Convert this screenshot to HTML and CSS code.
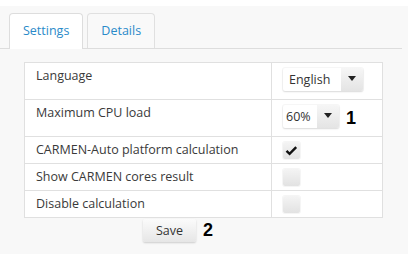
FILE: index.html
```
<!DOCTYPE html>
<html>
    <head>
        <title>Settings</title>
        <meta charset="UTF-8">
        <link rel="stylesheet" href="styles.css">
    </head>
    <body>
        <div class="panel">
            <ul class="tabs">
                <li class="tab active">Settings</li>
                <li class="tab">Details</li>
            </ul>
            <div class="tab-body">
                <table class="settings">
                    <tr class="tall">
                        <td class="label">Language</td>
                        <td class="value">
                            <div class="select lang">
                                <span class="select-text">English</span>
                                <span class="select-btn"><i class="caret"></i></span>
                            </div>
                        </td>
                    </tr>
                    <tr class="tall">
                        <td class="label">Maximum CPU load</td>
                        <td class="value">
                            <div class="value-row">
                                <div class="select cpu">
                                    <span class="select-text">60%</span>
                                    <span class="select-btn"><i class="caret"></i></span>
                                </div>
                                <span class="mark">1</span>
                            </div>
                        </td>
                    </tr>
                    <tr>
                        <td class="label">CARMEN-Auto platform calculation</td>
                        <td class="value">
                            <span class="check">
                                <svg width="13" height="11" viewBox="0 0 13 11"><path d="M1.5 5.8 L4.6 8.8 L11.2 2.2" fill="none" stroke="#111" stroke-width="2.4"/></svg>
                            </span>
                        </td>
                    </tr>
                    <tr>
                        <td class="label">Show CARMEN cores result</td>
                        <td class="value"><span class="check"></span></td>
                    </tr>
                    <tr>
                        <td class="label">Disable calculation</td>
                        <td class="value"><span class="check"></span></td>
                    </tr>
                </table>
                <div class="actions">
                    <button class="btn">Save</button>
                    <span class="mark">2</span>
                </div>
            </div>
        </div>
    </body>
</html>
```

FILE: styles.css
```
html, body{
    margin: 0;
    background: #ffffff;
}

body{
    font-family: "Open Sans", "Liberation Sans", sans-serif;
    font-size: 12.5px;
    color: #3a3a3a;
}

.panel{
    margin-top: 6px;
    height: 248px;
    background: #f8f8f8;
    padding-top: 7px;
    box-sizing: border-box;
}

.tabs{
    display: flex;
    gap: 4px;
    list-style: none;
    margin: 0 6px 0 0;
    padding: 0 0 0 9px;
    border-bottom: 1px solid #dddddd;
}

.tab{
    height: 34px;
    line-height: 34px;
    padding: 0 13px;
    margin-bottom: -1px;
    border: 1px solid #e0e0e0;
    border-bottom: none;
    border-radius: 4px 4px 0 0;
    color: #2a8ac9;
    background: #f9f9f9;
}

.tab.active{
    background: #ffffff;
    height: 35px;
    border-color: #dddddd;
}

.tab-body{
    padding: 13px 0 0 24px;
}

.settings{
    width: 359px;
    border-collapse: collapse;
    background: #ffffff;
    border: 1px solid #dddddd;
}

.settings td{
    border: 1px solid #e0e0e0;
    padding: 4px 11px;
    line-height: 18px;
    vertical-align: top;
}

.settings td.label{
    width: 224px;
    padding-left: 11px;
}

.tall td{
    padding-bottom: 4px;
}

.tall td.label{
    padding-top: 4px;
}

.value-row{
    display: flex;
    align-items: center;
    gap: 7px;
}

.select{
    display: flex;
    height: 23px;
    margin: 1px 0 4px 0;
    background: #ffffff;
    border-radius: 2px;
    box-shadow: 0 1px 2px rgba(0, 0, 0, 0.12), 0 0 0 1px rgba(0, 0, 0, 0.03);
    box-sizing: border-box;
}

.select.lang{
    width: 80px;
}

.select.cpu{
    width: 56px;
}

.select-text{
    flex: 1;
    padding-left: 6px;
    line-height: 23px;
    color: #333333;
}

.select.cpu .select-text{
    padding-left: 3px;
}

.select-btn{
    width: 22px;
    display: flex;
    align-items: center;
    justify-content: center;
    background: linear-gradient(#f6f6f6, #e4e4e4);
    border-radius: 0 2px 2px 0;
}

.caret{
    width: 0;
    height: 0;
    border-left: 4px solid transparent;
    border-right: 4px solid transparent;
    border-top: 5px solid #222222;
    margin-top: -2px;
}

.mark{
    font-family: "Liberation Sans", Arial, sans-serif;
    font-weight: bold;
    font-size: 18px;
    color: #000000;
}

.check{
    display: flex;
    align-items: center;
    justify-content: center;
    width: 17px;
    height: 17px;
    margin-top: 1px;
    border-radius: 2px;
    background: linear-gradient(#f4f4f4, #e2e2e2);
    box-shadow: 0 0 0 1px rgba(0, 0, 0, 0.04);
}

.actions{
    display: flex;
    align-items: center;
    gap: 7px;
    margin: 1px 0 0 119px;
}

.btn{
    width: 53px;
    height: 23px;
    padding: 0;
    border: none;
    border-radius: 2px;
    font-family: "Open Sans", "Liberation Sans", sans-serif;
    font-size: 12.5px;
    color: #333333;
    background: linear-gradient(#fbfbfb, #e6e6e6);
    box-shadow: 0 1px 2px rgba(0, 0, 0, 0.18);
}
```
